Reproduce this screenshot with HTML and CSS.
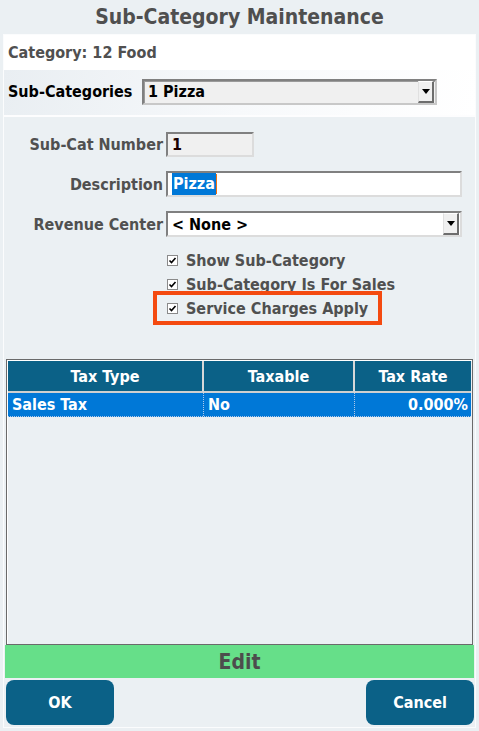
FILE: index.html
```html
<!DOCTYPE html>
<html>
<head>
<meta charset="utf-8">
<link rel="stylesheet" href="styles.css">
</head>
<body>
<div class="screen">
  <div class="title">Sub-Category Maintenance</div>
  <div class="panel">
    <div class="cat-row">Category: 12 Food</div>
    <div class="sub-row">
      <span class="sub-label">Sub-Categories</span>
      <div class="select sub-select">
        <span class="select-text">1 Pizza</span>
        <span class="drop"><svg width="8" height="5" viewBox="0 0 8 5"><path d="M0 0H8L4 5Z" fill="#000"/></svg></span>
      </div>
    </div>
    <div class="form">
      <div class="frow">
        <label class="flabel">Sub-Cat Number</label>
        <div class="input readonly num">1</div>
      </div>
      <div class="frow">
        <label class="flabel">Description</label>
        <div class="input wide"><span class="sel">Pizza</span><span class="caret"></span></div>
      </div>
      <div class="frow">
        <label class="flabel">Revenue Center</label>
        <div class="input wide select-white">
          <span class="select-text">&lt; None &gt;</span>
          <span class="drop"><svg width="8" height="5" viewBox="0 0 8 5"><path d="M0 0H8L4 5Z" fill="#000"/></svg></span>
        </div>
      </div>
      <div class="checks">
        <div class="check"><span class="box"><svg width="9" height="9" viewBox="0 0 9 9"><path d="M1.5 4.5L3.5 6.5L7.5 2" stroke="#000" stroke-width="1.6" fill="none"/></svg></span>Show Sub-Category</div>
        <div class="check"><span class="box"><svg width="9" height="9" viewBox="0 0 9 9"><path d="M1.5 4.5L3.5 6.5L7.5 2" stroke="#000" stroke-width="1.6" fill="none"/></svg></span>Sub-Category Is For Sales</div>
        <div class="check highlight"><span class="box"><svg width="9" height="9" viewBox="0 0 9 9"><path d="M1.5 4.5L3.5 6.5L7.5 2" stroke="#000" stroke-width="1.6" fill="none"/></svg></span>Service Charges Apply</div>
      </div>
    </div>
    <div class="table">
      <div class="thead">
        <div class="th c1">Tax Type</div>
        <div class="th c2">Taxable</div>
        <div class="th c3">Tax Rate</div>
      </div>
      <div class="trow">
        <div class="td c1">Sales Tax</div>
        <div class="td c2">No</div>
        <div class="td c3 right">0.000%</div>
      </div>
    </div>
    <div class="edit">Edit</div>
    <div class="buttons">
      <button class="btn">OK</button>
      <button class="btn">Cancel</button>
    </div>
  </div>
</div>
</body>
</html>
```
FILE: styles.css
```css
* { box-sizing: border-box; }
html, body { margin: 0; padding: 0; }
body {
  background: #ebf0f3;
  font-family: "DejaVu Sans", Tahoma, sans-serif;
  font-stretch: condensed;
  font-weight: bold;
  color: #505050;
}
.screen { width: 479px; height: 731px; }
.title {
  height: 34px;
  line-height: 34px;
  text-align: center;
  font-size: 21px;
  color: #4f4f4f;
}
.panel {
  margin: 0 3px;
  height: 694px;
  border: 1px solid #fbfcfd;
  display: flex;
  flex-direction: column;
}
.cat-row {
  height: 35px;
  background: #ffffff;
  font-size: 16px;
  padding-left: 4px;
  line-height: 35px;
}
.sub-row {
  height: 47px;
  background: linear-gradient(100deg, #e9eef2 0%, #f7f9fb 50%, #ffffff 100%);
  border-bottom: 2px solid #fdfdfe;
  display: flex;
  align-items: center;
  padding-left: 4px;
  padding-bottom: 2px;
}
.sub-label { color: #000; font-size: 16px; width: 134px; }
.select {
  display: flex;
  align-items: center;
  height: 26px;
  border: 2px solid #808080;
  border-right-color: #c8c8c8;
  border-bottom-color: #c8c8c8;
  font-size: 16px;
  color: #000;
}
.sub-select {
  width: 295px;
  background: #f0f0f0;
  box-shadow: inset 1px 1px 0 #9a9a9a;
}
.select-text { flex: 1; padding-left: 4px; }
.drop {
  width: 16px;
  height: 22px;
  margin-right: 1px;
  background: #f0f0f0;
  border-left: 1px solid #e0e0e0;
  border-top: 1px solid #fff;
  border-right: 2px solid #6d6d6d;
  border-bottom: 2px solid #6d6d6d;
  display: flex;
  align-items: center;
  justify-content: center;
}
.form {
  padding-top: 14px;
  display: flex;
  flex-direction: column;
  gap: 14px;
}
.frow { display: flex; align-items: center; height: 26px; gap: 3px; }
.flabel {
  width: 159px;
  text-align: right;
  font-size: 16px;
  color: #505050;
}
.input {
  height: 26px;
  border: 2px solid #808080;
  border-right-color: #dcdcdc;
  border-bottom-color: #dcdcdc;
  background: #fff;
  font-size: 16px;
  color: #000;
  display: flex;
  align-items: center;
  padding-left: 4px;
}
.readonly { width: 88px; background: #f0f0f0; height: 25px; }
.num { color: #1a0000; }
.wide { width: 296px; }
.sel { background: #0078d7; color: #fff; padding: 1px 1px 2px 1px; }
.caret { width: 1px; height: 20px; background: #f07010; }
.select-white { padding-left: 0; }
.select-white .drop { background: #f0f0f0; }
.checks {
  margin-top: -3px;
  padding-left: 157px;
  display: flex;
  flex-direction: column;
  font-size: 16px;
  color: #505050;
}
.check {
  height: 24px;
  display: flex;
  align-items: center;
  padding-left: 6px;
}
.box {
  width: 11px;
  height: 11px;
  border: 1px solid #8a8a8a;
  background: #fff;
  margin-right: 8px;
  display: flex;
  align-items: center;
  justify-content: center;
}
.highlight {
  align-self: flex-start;
  margin-left: -8px;
  padding-left: 10px;
  padding-right: 10px;
  height: 34px;
  border: 4px solid #f44a10;
  margin-top: -5px;
}
.table {
  margin: 34px 2px 0 2px;
  height: 286px;
  border: 1px solid #6a6a6a;
  box-shadow: inset 1px 1px 0 #fff;
  padding: 1px 1px 0 1px;
  background: #ebf0f3;
}
.thead {
  display: flex;
  height: 32px;
  background: #0b6187;
}
.th {
  color: #fff;
  font-size: 16px;
  display: flex;
  align-items: center;
  justify-content: center;
  border-right: 2px solid #d8d8d8;
  border-bottom: 2px solid #d0d0d0;
}
.th.c3 { border-right: none; }
.c1 { width: 196px; }
.c2 { width: 151px; }
.c3 { flex: 1; }
.trow {
  display: flex;
  height: 24px;
  background: #0078d7;
  border-bottom: 1px dotted #b0c8e8;
}
.td {
  color: #fff;
  font-size: 16px;
  display: flex;
  align-items: center;
  padding-left: 4px;
  border-right: 1px dotted #b0c8e8;
}
.td.c3 { border-right: none; }
.td.right { justify-content: flex-end; padding-right: 3px; }
.edit {
  margin: 0 1px;
  height: 33px;
  background: #66df89;
  font-size: 21px;
  color: #4d4d4d;
  display: flex;
  align-items: center;
  justify-content: center;
}
.buttons {
  display: flex;
  justify-content: space-between;
  padding: 2px 1px 0 2px;
}
.btn {
  width: 108px;
  height: 45px;
  border: none;
  border-radius: 8px;
  background: #0b6187;
  color: #fff;
  font-family: "DejaVu Sans", Tahoma, sans-serif;
  font-stretch: condensed;
  font-weight: bold;
  font-size: 16px;
}
```
